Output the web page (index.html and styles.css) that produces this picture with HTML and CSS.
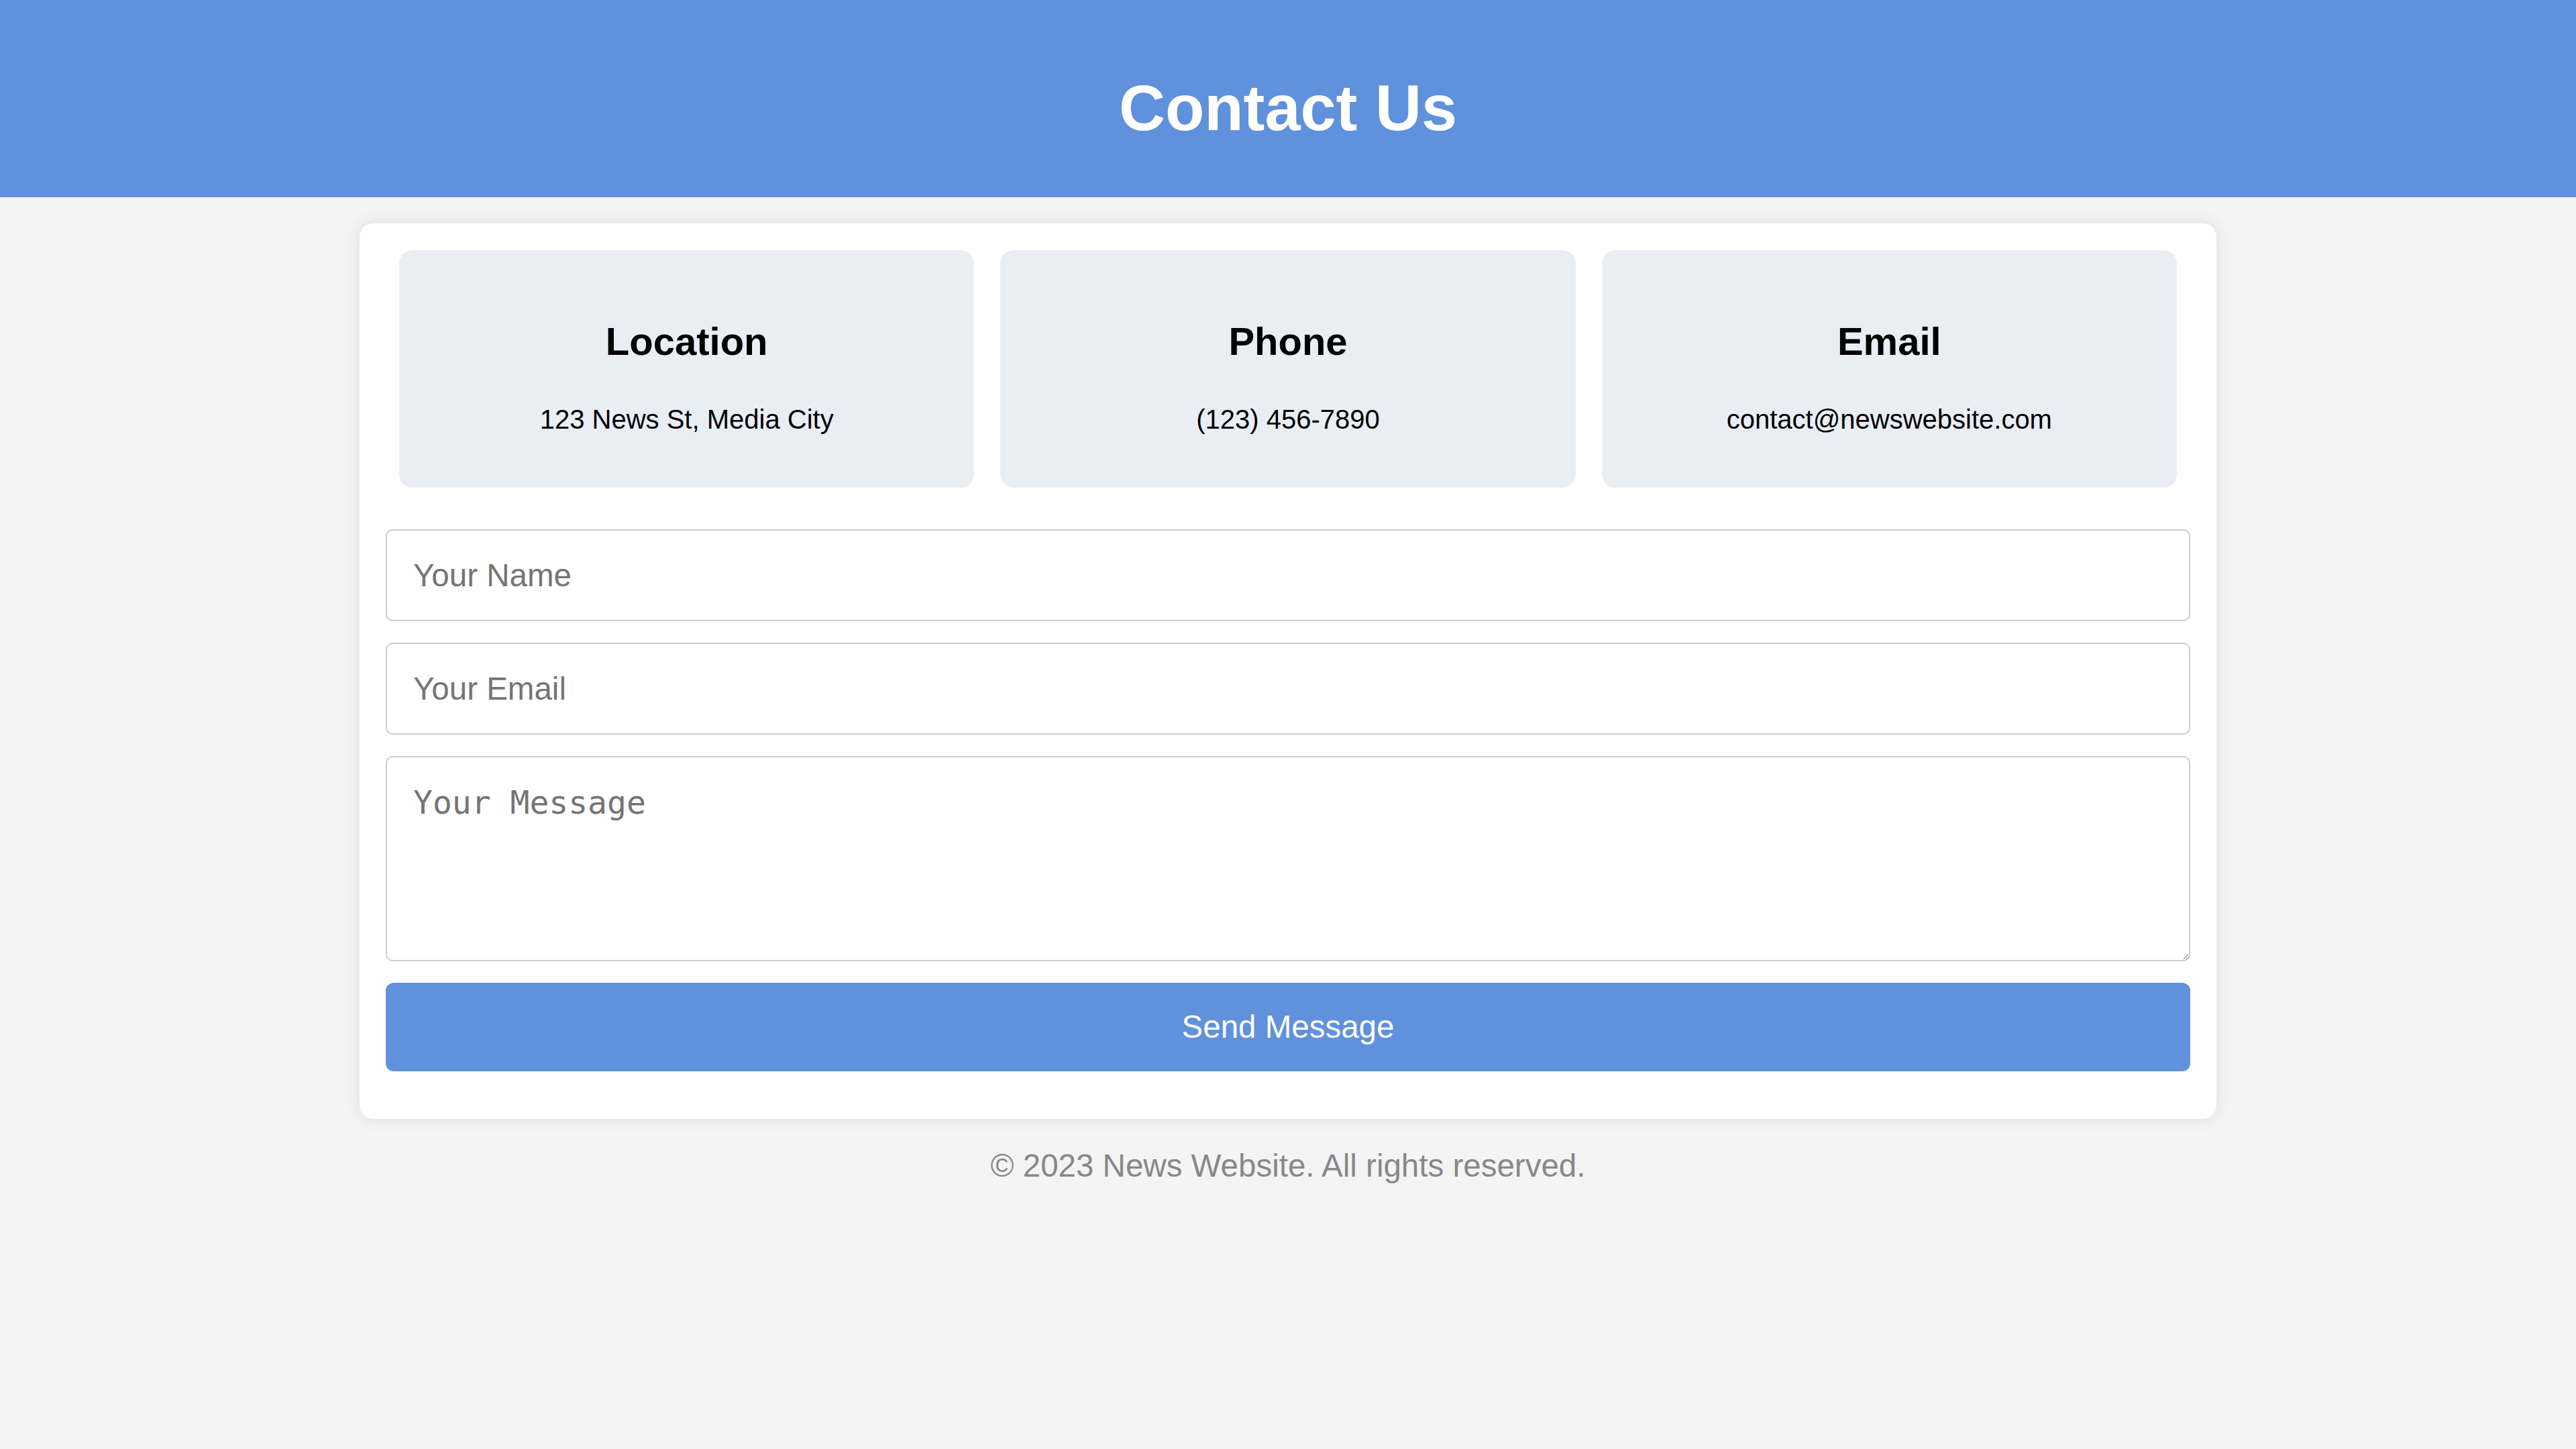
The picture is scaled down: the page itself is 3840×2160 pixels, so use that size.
FILE: index.html
```html
<!DOCTYPE html>
<html lang="en">
<head>
<meta charset="utf-8">
<title>Contact Us</title>
<link rel="stylesheet" href="styles.css">
</head>
<body>
<header class="site-header">
  <h1 class="site-title">Contact Us</h1>
</header>
<main class="contact-card">
  <section class="info-row">
    <div class="info-box">
      <h2 class="info-title">Location</h2>
      <p class="info-text">123 News St, Media City</p>
    </div>
    <div class="info-box">
      <h2 class="info-title">Phone</h2>
      <p class="info-text">(123) 456-7890</p>
    </div>
    <div class="info-box">
      <h2 class="info-title">Email</h2>
      <p class="info-text">contact@newswebsite.com</p>
    </div>
  </section>
  <form class="contact-form">
    <input class="field" type="text" placeholder="Your Name">
    <input class="field" type="email" placeholder="Your Email">
    <textarea class="field field-message" placeholder="Your Message"></textarea>
    <button class="send-btn" type="button">Send Message</button>
  </form>
</main>
<footer class="site-footer">
  <p class="footer-text">© 2023 News Website. All rights reserved.</p>
</footer>
</body>
</html>
```
FILE: styles.css
```css
html, body {
  margin: 0;
  padding: 0;
}
body {
  background: #f4f4f4;
  font-family: "Liberation Sans", Arial, Helvetica, sans-serif;
  color: #000;
}
.site-header {
  background: #5f91dc;
  padding: 106.5px 0 78px;
  text-align: center;
}
.site-title {
  margin: 0;
  color: #fff;
  font-size: 95.5px;
  font-weight: 700;
  line-height: normal;
}
.contact-card {
  width: 2768px;
  box-sizing: border-box;
  margin: 39px auto 0;
  padding: 40px 39px 39px;
  background: #fff;
  border-radius: 20px;
  box-shadow: 0 0 25px rgba(0, 0, 0, 0.1);
}
.info-row {
  display: flex;
  gap: 39px;
  padding: 0 20px;
}
.info-box {
  flex: 1 1 0;
  background: #e9eef5;
  border-radius: 20px;
  text-align: center;
  padding: 0 20px;
}
.info-title {
  margin: 102px 0 61px;
  font-size: 58px;
  font-weight: 700;
  line-height: normal;
}
.info-text {
  margin: 0 0 79px;
  font-size: 40px;
  line-height: normal;
}
.contact-form {
  display: flex;
  flex-direction: column;
  gap: 32px;
  margin-top: 62px;
  margin-bottom: 32px;
}
.field {
  display: block;
  width: 100%;
  box-sizing: border-box;
  margin: 0;
  padding: 39px;
  border: 2px solid #cccccc;
  border-radius: 10px;
  background: #fff;
  font-family: "Liberation Sans", Arial, Helvetica, sans-serif;
  font-size: 47.5px;
  line-height: normal;
  color: #000;
  outline: none;
}
.field::placeholder {
  color: #757575;
}
.field-message {
  height: 306px;
  font-family: "DejaVu Sans Mono", "Liberation Mono", monospace;
  font-size: 48px;
  resize: both;
}
.send-btn {
  display: block;
  width: 100%;
  box-sizing: border-box;
  height: 132px;
  margin: 0;
  border: none;
  border-radius: 12px;
  background: #5f91dc;
  color: #fff;
  font-family: "Liberation Sans", Arial, Helvetica, sans-serif;
  font-size: 47.5px;
  cursor: pointer;
}
.site-footer {
  text-align: center;
  padding: 42px 0 39px;
}
.footer-text {
  margin: 0;
  color: #888888;
  font-size: 47.5px;
  line-height: normal;
}
```
